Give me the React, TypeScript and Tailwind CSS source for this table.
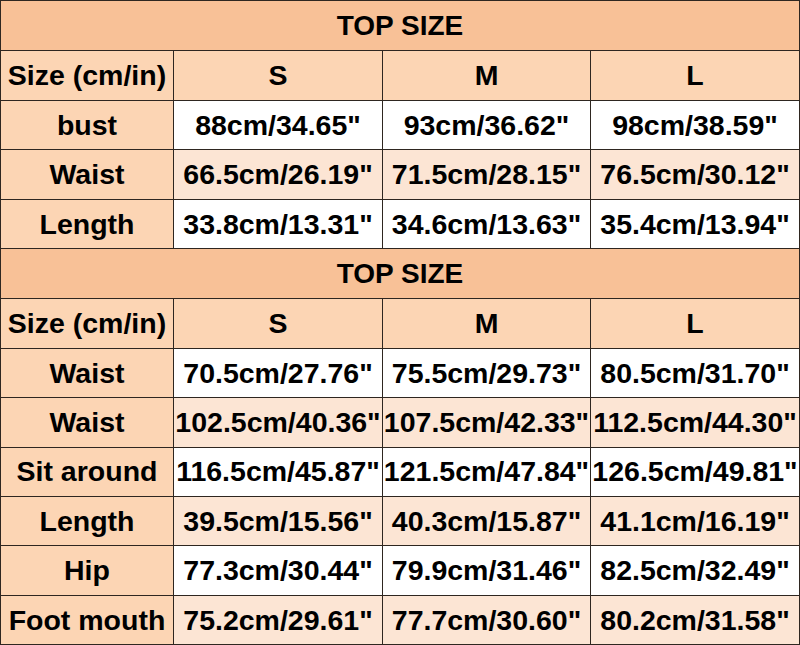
const tables = [
  {
    title: "TOP SIZE",
    rows: [
      ["bust", "88cm/34.65\"", "93cm/36.62\"", "98cm/38.59\""],
      ["Waist", "66.5cm/26.19\"", "71.5cm/28.15\"", "76.5cm/30.12\""],
      ["Length", "33.8cm/13.31\"", "34.6cm/13.63\"", "35.4cm/13.94\""],
    ],
  },
  {
    title: "TOP SIZE",
    rows: [
      ["Waist", "70.5cm/27.76\"", "75.5cm/29.73\"", "80.5cm/31.70\""],
      ["Waist", "102.5cm/40.36\"", "107.5cm/42.33\"", "112.5cm/44.30\""],
      ["Sit around", "116.5cm/45.87\"", "121.5cm/47.84\"", "126.5cm/49.81\""],
      ["Length", "39.5cm/15.56\"", "40.3cm/15.87\"", "41.1cm/16.19\""],
      ["Hip", "77.3cm/30.44\"", "79.9cm/31.46\"", "82.5cm/32.49\""],
      ["Foot mouth", "75.2cm/29.61\"", "77.7cm/30.60\"", "80.2cm/31.58\""],
    ],
  },
];

const cols = "grid grid-cols-[173px_209px_208px_1fr]";
const cell = "flex items-center justify-center border-r border-b border-[#2e2620] whitespace-nowrap overflow-visible";

export default function App() {
  return (
    <div
      className="w-[800px] h-[645px] flex flex-col bg-white text-black font-bold text-[28.5px] leading-none border-t border-l border-[#2e2620]"
      style={{ fontFamily: '"Liberation Sans", Arial, sans-serif' }}
    >
      {tables.map((t, ti) => (
        <div key={ti} className="contents">
          <div className={`flex-1 ${cell} bg-[#f8c197] text-[28px]`}>{t.title}</div>
          <div className={`flex-1 ${cols}`}>
            <div className={`${cell} bg-[#fcd5b4]`}>Size (cm/in)</div>
            <div className={`${cell} bg-[#fcd5b4]`}>S</div>
            <div className={`${cell} bg-[#fcd5b4]`}>M</div>
            <div className={`${cell} bg-[#fcd5b4]`}>L</div>
          </div>
          {t.rows.map((r, ri) => (
            <div key={ri} className={`flex-1 ${cols}`}>
              <div className={`${cell} bg-[#fcd5b4]`}>{r[0]}</div>
              {r.slice(1).map((v, vi) => (
                <div
                  key={vi}
                  className={`${cell} ${ri % 2 === 1 ? "bg-[#fce5d4]" : "bg-white"}`}
                >
                  {v}
                </div>
              ))}
            </div>
          ))}
        </div>
      ))}
    </div>
  );
}
